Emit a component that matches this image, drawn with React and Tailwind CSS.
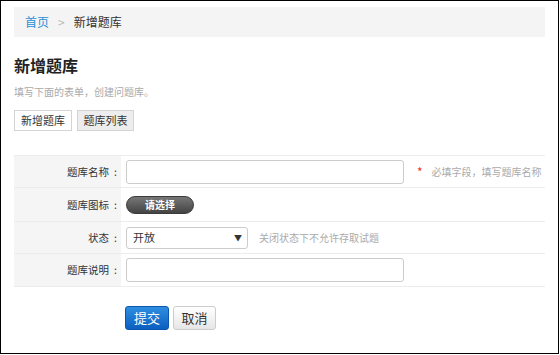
import React from "react";

const font = { fontFamily: '"Noto Sans CJK SC", "Noto Sans", sans-serif' };

function Row({ label, children, last }) {
  return (
    <div className={"flex border-t border-[#ececec] " + (last ? "border-b" : "")}>
      <div className="w-[107px] shrink-0 bg-[#f5f5f5] flex items-center justify-end pr-[3px] text-[10.5px] text-[#333]">
        <span>{label}</span>
        <span className="ml-[5px] mr-[1px]">:</span>
      </div>
      <div className="flex-1 flex items-center pl-[5px]">{children}</div>
    </div>
  );
}

export default function App() {
  return (
    <div className="w-[559px] h-[354px] border border-black bg-white" style={font}>
      <div className="mx-[13px] mt-[6px] h-[30px] bg-[#f4f4f4] flex items-center pl-[11px] text-[12px]">
        <span className="text-[#2a8fd6]">首页</span>
        <span className="text-[#bbb] mx-[9px]">&gt;</span>
        <span className="text-[#333]">新增题库</span>
      </div>

      <div className="px-[13px]">
        <h1 className="mt-[17px] text-[16px] font-bold text-[#222] leading-[22px]">新增题库</h1>
        <p className="mt-[9px] text-[10px] text-[#aaa] leading-[14px]">填写下面的表单，创建问题库。</p>
        <div className="mt-[11px] flex gap-[5px]">
          <button className="h-[21px] w-[58px] border border-[#d4d4d4] bg-white text-[11px] text-[#333]">新增题库</button>
          <button className="h-[21px] w-[57px] border border-[#d4d4d4] bg-[#ededed] text-[11px] text-[#333]">题库列表</button>
        </div>

        <div className="mt-[24px]">
          <Row label="题库名称">
            <div className="h-[31px] flex items-center whitespace-nowrap">
              <input className="w-[278px] h-[24px] border border-[#ccc] rounded-[3px]" />
              <span className="ml-[13px] text-[#e33] text-[12px]">*</span>
              <span className="ml-[9px] text-[10px] text-[#aaa]">必填字段，填写题库名称</span>
            </div>
          </Row>
          <Row label="题库图标">
            <div className="h-[33px] flex items-center">
              <button className="w-[68px] h-[18px] rounded-full bg-gradient-to-b from-[#777] to-[#444] border border-[#3a3a3a] text-white text-[10px] font-bold leading-none">
                请选择
              </button>
            </div>
          </Row>
          <Row label="状态">
            <div className="h-[31px] flex items-center whitespace-nowrap">
              <div className="w-[122px] h-[22px] border border-[#ccc] rounded-[3px] flex items-center justify-between pl-[6px] pr-[5px] text-[11px] text-[#333]">
                <span>开放</span>
                <span className="text-[8px]">▼</span>
              </div>
              <span className="ml-[11px] text-[10px] text-[#aaa]">关闭状态下不允许存取试题</span>
            </div>
          </Row>
          <Row label="题库说明" last>
            <div className="h-[32px] flex items-center">
              <input className="w-[278px] h-[24px] border border-[#ccc] rounded-[3px]" />
            </div>
          </Row>
        </div>

        <div className="mt-[19px] ml-[111px] flex gap-[4px]">
          <button className="w-[44px] h-[24px] rounded-[3px] bg-gradient-to-b from-[#2f8ee0] to-[#0b5fc0] border border-[#0a55ad] text-white text-[13px]">提交</button>
          <button className="w-[43px] h-[24px] rounded-[3px] bg-gradient-to-b from-white to-[#e6e6e6] border border-[#ccc] text-[#333] text-[13px]">取消</button>
        </div>
      </div>
    </div>
  );
}
